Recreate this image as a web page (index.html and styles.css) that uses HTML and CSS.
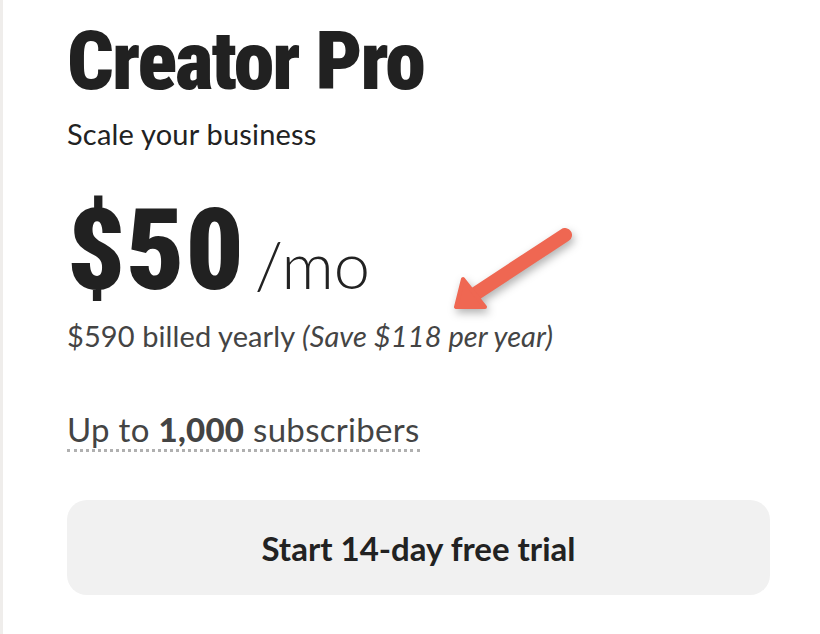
FILE: index.html
```html
<!DOCTYPE html>
<html lang="en">
<head>
  <meta charset="UTF-8">
  <meta name="viewport" content="width=device-width, initial-scale=1.0">
  <title>Creator Pro</title>
  <link rel="stylesheet" href="styles.css">
</head>
<body>
  <div class="page">
    <div class="card">
      <h1 class="plan-name">Creator Pro</h1>
      <p class="plan-tagline">Scale your business</p>

      <div class="price-row">
        <span class="price-amount">$50</span>
        <span class="price-period">/mo</span>
      </div>
      <p class="price-note">$590 billed yearly <em>(Save $118 per year)</em></p>

      <div class="subs">
        <span class="subs-label">Up to <strong>1,000</strong> subscribers</span>
      </div>

      <button type="button" class="trial-btn">Start 14-day free trial</button>
    </div>

    <!-- annotation arrow pointing at the yearly savings -->
    <svg class="arrow" width="140" height="100" viewBox="0 0 140 100">
      <line x1="125" y1="15" x2="32" y2="76" />
      <polygon points="23,59 16,87 45,87" />
    </svg>
  </div>
</body>
</html>
```
FILE: styles.css
```css
body {
  margin: 0;
  background-color: #ffffff;
  font-family: Lato, "Open Sans", sans-serif;
  color: #222;
}

.page {
  position: relative;
  min-height: 634px;
  border-left: 3px solid #efedeb;
  box-sizing: border-box;
}

.card {
  padding: 20px 50px 0 64px;
}

.plan-name {
  margin: 0;
  font-family: Roboto, sans-serif;
  font-weight: 900;
  font-stretch: condensed;
  font-size: 82px;
  line-height: 1;
  letter-spacing: -2px;
  color: #212121;
}

.plan-tagline {
  margin: 15px 0 0;
  font-size: 29px;
  line-height: 1.2;
  letter-spacing: 0.2px;
  color: #222;
}

.price-row {
  display: flex;
  align-items: baseline;
  gap: 10px;
  margin-top: 41px;
  line-height: 1;
}

.price-amount {
  font-family: Roboto, sans-serif;
  font-weight: 900;
  font-stretch: condensed;
  font-size: 114px;
  letter-spacing: 1px;
  color: #212121;
}

.price-period {
  font-weight: 300;
  font-size: 65px;
  color: #222;
}

.price-note {
  margin: 12px 0 0;
  font-size: 29px;
  line-height: 1.2;
  letter-spacing: 0.1px;
  color: #444;
}

.subs {
  margin-top: 56px;
}

.subs-label {
  display: inline-block;
  font-size: 33px;
  line-height: 1.2;
  letter-spacing: 0.3px;
  color: #444;
  border-bottom: 3px dotted #b0b0b0;
}

.subs-label strong {
  font-weight: 900;
}

.trial-btn {
  display: block;
  width: 100%;
  height: 95px;
  margin-top: 48px;
  padding: 0;
  border: none;
  border-radius: 20px;
  background-color: #f1f1f1;
  font-family: Lato, sans-serif;
  font-weight: 700;
  font-size: 33px;
  color: #222;
  cursor: pointer;
}

.arrow {
  position: absolute;
  left: 437px;
  top: 220px;
  filter: drop-shadow(2px 4px 4px rgba(0, 0, 0, 0.3));
}

.arrow line {
  stroke: #ef6752;
  stroke-width: 14;
  stroke-linecap: round;
}

.arrow polygon {
  fill: #ef6752;
  stroke: #ef6752;
  stroke-width: 4;
  stroke-linejoin: round;
}
```
